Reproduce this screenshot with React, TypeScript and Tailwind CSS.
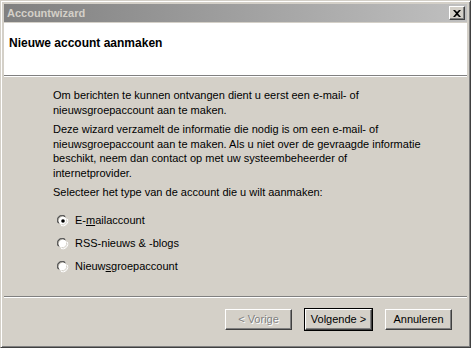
import React from "react";

const font = { fontFamily: '"Liberation Sans", Arial, sans-serif' };

function Radio({ checked }: { checked?: boolean }) {
  return (
    <span className="relative inline-block w-[12px] h-[12px] shrink-0">
      <svg width="12" height="12" viewBox="0 0 12 12" className="block">
        <path d="M1 8 A5 5 0 0 1 8 1" stroke="#808080" strokeWidth="1" fill="none" />
        <path d="M2 8.5 A4.2 4.2 0 0 1 8.5 2" stroke="#404040" strokeWidth="1" fill="none" />
        <circle cx="6" cy="6" r="4.2" fill="#fff" />
        <path d="M10.5 4 A5 5 0 0 1 4 10.5" stroke="#fff" strokeWidth="1" fill="none" />
        <path d="M9.5 4.5 A4 4 0 0 1 4.5 9.5" stroke="#d4d0c8" strokeWidth="1" fill="none" />
        {checked && <circle cx="6" cy="6" r="1.8" fill="#000" />}
      </svg>
    </span>
  );
}

function Button({ children, primary, disabled }: { children: React.ReactNode; primary?: boolean; disabled?: boolean }) {
  return (
    <div className={primary ? "border border-black" : "border border-transparent"}>
      <div
        className={
          "w-[67px] h-[21px] flex items-center justify-center bg-[#d4d0c8] border-t border-l border-white border-r border-b border-r-[#404040] border-b-[#404040] shadow-[inset_-1px_-1px_0_#808080] text-[11px]" +
          (disabled ? " text-[#808080] [text-shadow:1px_1px_0_#fff]" : " text-black")
        }
      >
        {children}
      </div>
    </div>
  );
}

export default function App() {
  return (
    <div
      style={font}
      className="w-[471px] h-[348px] bg-[#d4d0c8] border-t border-l border-[#d4d0c8] border-r border-b border-r-[#404040] border-b-[#404040] shadow-[inset_1px_1px_0_#fff,inset_-1px_-1px_0_#808080] p-[3px] flex flex-col text-[11px] text-black"
    >
      <div className="h-[18px] flex items-center justify-between bg-gradient-to-r from-[#808080] to-[#c0c0c0] pl-[3px] pr-[2px]">
        <span className="font-bold text-[#d4d0c8] text-[11px]">Accountwizard</span>
        <div className="w-[16px] h-[14px] bg-[#d4d0c8] border-t border-l border-white border-r border-b border-r-[#404040] border-b-[#404040] shadow-[inset_-1px_-1px_0_#808080] flex items-center justify-center">
          <svg width="8" height="7" viewBox="0 0 8 7">
            <path d="M0 0 L2 0 L4 2 L6 0 L8 0 L5 3.5 L8 7 L6 7 L4 5 L2 7 L0 7 L3 3.5 Z" fill="#000" />
          </svg>
        </div>
      </div>
      <div className="mt-[1px] h-[52px] bg-white pl-[5px] pt-[11px]">
        <div className="font-bold text-[12px]">Nieuwe account aanmaken</div>
      </div>
      <div className="h-[1px] bg-[#808080]" />
      <div className="h-[1px] bg-white" />
      <div className="flex-1 flex flex-col pl-[49px] pt-[11px] leading-[14.5px]">
        <p>Om berichten te kunnen ontvangen dient u eerst een e-mail- of<br />nieuwsgroepaccount aan te maken.</p>
        <p className="mt-[5px]">
          Deze wizard verzamelt de informatie die nodig is om een e-mail- of<br />
          nieuwsgroepaccount aan te maken. Als u niet over de gevraagde informatie<br />
          beschikt, neem dan contact op met uw systeembeheerder of<br />
          internetprovider.
        </p>
        <p className="mt-[5px]">Selecteer het type van de account die u wilt aanmaken:</p>
        <div className="mt-[14px] flex flex-col gap-[9px] pl-[4px]">
          <label className="flex items-center gap-[6px] h-[14px]">
            <Radio checked />
            <span>E-<u>m</u>ailaccount</span>
          </label>
          <label className="flex items-center gap-[6px] h-[14px]">
            <Radio />
            <span>RSS-nieuws &amp; -blogs</span>
          </label>
          <label className="flex items-center gap-[6px] h-[14px]">
            <Radio />
            <span>Nieuw<u>s</u>groepaccount</span>
          </label>
        </div>
      </div>
      <div className="h-[1px] bg-[#808080]" />
      <div className="h-[1px] bg-white" />
      <div className="h-[46px] flex items-start justify-end pt-[10px] pr-[14px] gap-[11px]">
        <Button disabled>&lt; Vorige</Button>
        <Button primary>Volgende &gt;</Button>
        <Button>Annuleren</Button>
      </div>
    </div>
  );
}
